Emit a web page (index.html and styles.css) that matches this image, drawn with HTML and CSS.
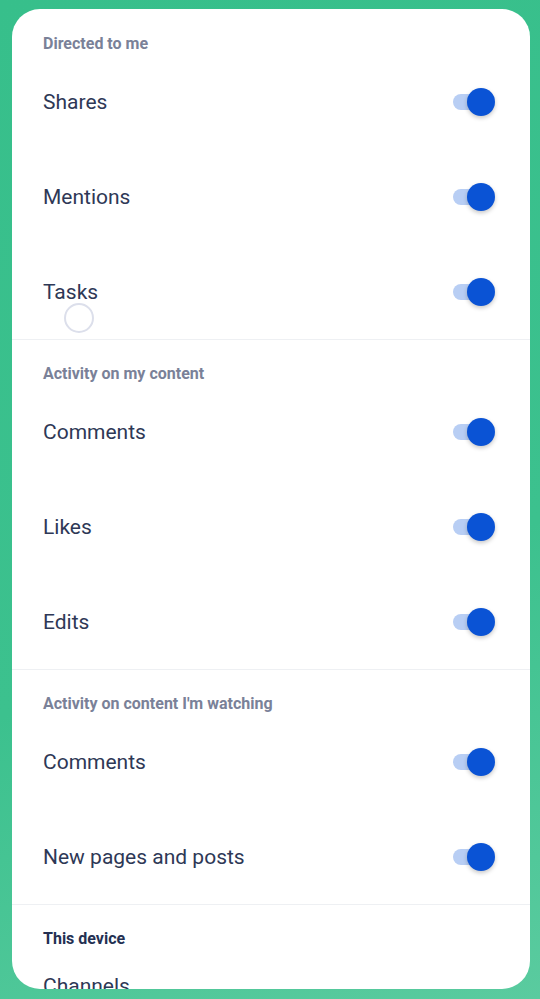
FILE: index.html
```html
<!DOCTYPE html>
<html lang="en">
<head>
  <meta charset="UTF-8" />
  <meta name="viewport" content="width=device-width, initial-scale=1.0"/>
  <title>Notification settings</title>
  <link rel="stylesheet" href="styles.css">
</head>
<body>
  <div class="card">
    <section class="group first">
      <h2>Directed to me</h2>
      <div class="row"><span>Shares</span><span class="toggle on"></span></div>
      <div class="row"><span>Mentions</span><span class="toggle on"></span></div>
      <div class="row"><span>Tasks</span><span class="toggle on"></span></div>
      <span class="ripple"></span>
    </section>

    <section class="group">
      <h2>Activity on my content</h2>
      <div class="row"><span>Comments</span><span class="toggle on"></span></div>
      <div class="row"><span>Likes</span><span class="toggle on"></span></div>
      <div class="row"><span>Edits</span><span class="toggle on"></span></div>
    </section>

    <section class="group">
      <h2>Activity on content I'm watching</h2>
      <div class="row"><span>Comments</span><span class="toggle on"></span></div>
      <div class="row"><span>New pages and posts</span><span class="toggle on"></span></div>
    </section>

    <section class="group device">
      <h2>This device</h2>
      <div class="link-row">Channels</div>
    </section>
  </div>
</body>
</html>
```

FILE: styles.css
```css
* { box-sizing: border-box; margin: 0; padding: 0; }

html, body {
  height: 999px;
  overflow: hidden;
}

body {
  font-family: Roboto, "Noto Sans", Arial, sans-serif;
  background: linear-gradient(160deg, #37bf8b 0%, #3cc18e 60%, #5acb9f 100%);
  padding: 9px 10px 0 12px;
}

.card {
  background: #fff;
  border-radius: 28px;
  height: 980px;
  overflow: hidden;
}

.group {
  position: relative;
  padding-top: 24px;
  border-top: 1px solid #eef0f3;
}

.group.first {
  padding-top: 25px;
  border-top: none;
}

.group h2 {
  font-size: 16px;
  line-height: 20px;
  font-weight: 700;
  color: #7a8198;
  padding-left: 31px;
}

.group.device h2 {
  color: #243052;
}

.row {
  height: 95px;
  padding: 0 35px 0 31px;
  display: flex;
  align-items: center;
  justify-content: space-between;
  font-size: 21px;
  color: #2e3856;
}

.link-row {
  padding: 25px 31px 0;
  font-size: 21px;
  line-height: 24px;
  color: #2e3856;
}

.toggle {
  position: relative;
  width: 42px;
  height: 28px;
}

.toggle::before {
  content: "";
  position: absolute;
  left: 0;
  top: 6px;
  width: 32px;
  height: 16px;
  border-radius: 8px;
  background: #b8cef4;
}

.toggle::after {
  content: "";
  position: absolute;
  right: 0;
  top: 0;
  width: 28px;
  height: 28px;
  border-radius: 50%;
  background: #0a53d5;
  box-shadow: 0 2px 4px rgba(0, 0, 0, 0.22);
}

.ripple {
  position: absolute;
  left: 52px;
  top: 294px;
  width: 30px;
  height: 30px;
  border-radius: 50%;
  border: 2px solid #dcdfeb;
}
```
